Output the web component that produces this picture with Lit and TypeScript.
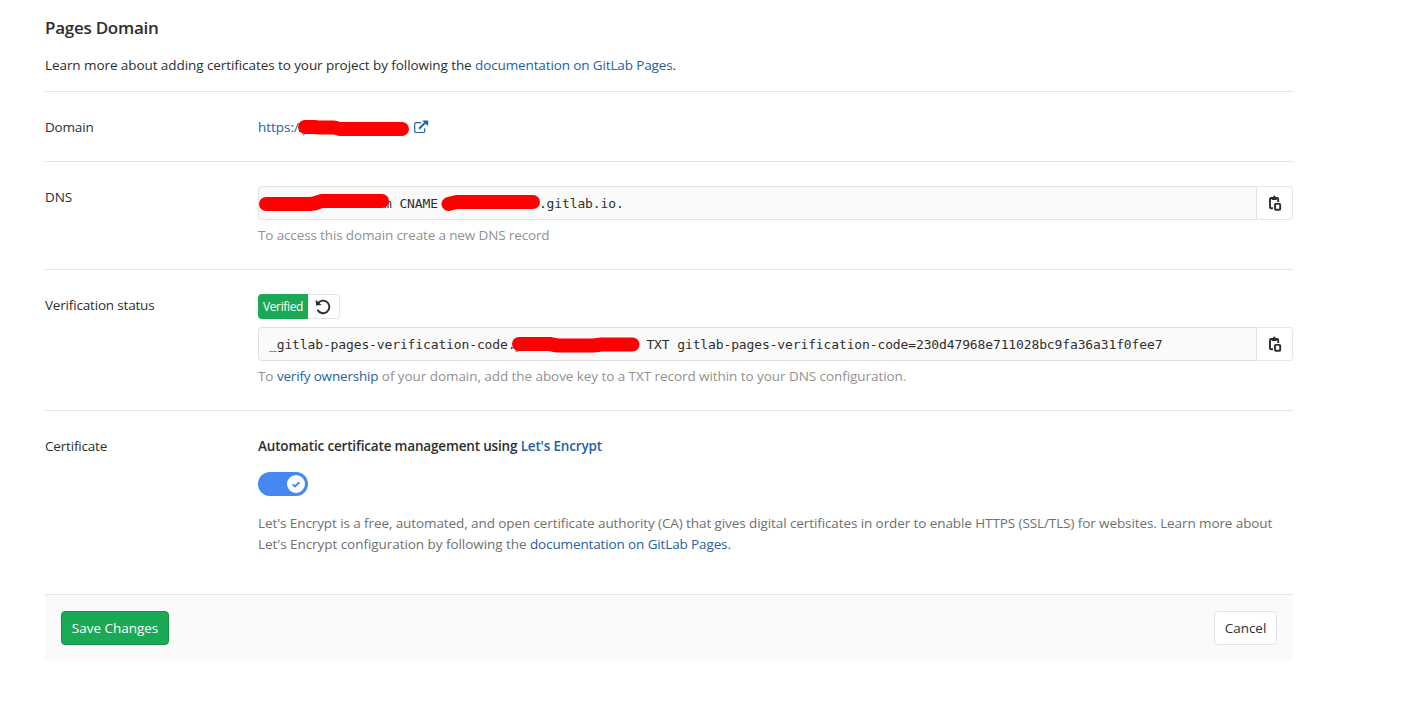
import { LitElement, html, svg, css } from "lit";
import { customElement } from "lit/decorators.js";

const copyIcon = html`<svg class="copy-icon" width="16" height="16" viewBox="0 0 16 16" fill="none" stroke="#2e2e2e">
  <path d="M6 13.200H4A1 1 0 0 1 3 12.200V4A1 1 0 0 1 4 3h6.200a1 1 0 0 1 1 1v3" stroke-width="1.900" />
  <path d="M4.700 5V2.700L6 2A1.300 1.300 0 0 1 7.200 .6A1.300 1.300 0 0 1 8.400 2l1.300 .7V5z" fill="#2e2e2e" stroke="none" />
  <rect x="8" y="8.900" width="5.200" height="5.900" rx="0.800" stroke-width="1.900" />
</svg>`;

const stroke = (d: string, width = 14) =>
  svg`<path d=${d} fill="none" stroke="#ff0000" stroke-width=${width} stroke-linecap="round" stroke-linejoin="round" />`;

@customElement("app-root")
export class AppRoot extends LitElement {
  static styles = css`
    :host {
      display: block;
      box-sizing: border-box;
      width: 1413px;
      height: 713px;
      padding: 0 120px 0 45px;
      background: #fff;
      color: #2e2e2e;
      font: 13.5px/21px "Open Sans", "Noto Sans", sans-serif;
      letter-spacing: -0.093px;
    }
    * { box-sizing: border-box; }
    svg { display: block; flex: none; overflow: visible; }
    a { color: #2560a4; text-decoration: none; }
    .doc { letter-spacing: -0.126px; }
    header { height: 92px; padding-top: 16px; border-bottom: 1px solid #e5e5e5; }
    h4 { margin: 0; font-size: 17px; line-height: 24px; font-weight: 600; letter-spacing: -0.265px; }
    .intro { margin: 15px 0 0; letter-spacing: -0.075px; }
    .row { display: grid; grid-template-columns: 213px 1fr; padding-top: 25px; border-bottom: 1px solid #e5e5e5; }
    .domain { height: 70px; }
    .dns { height: 108px; }
    .verification { height: 141px; }
    .certificate { height: 184px; border-bottom: none; }
    .label { letter-spacing: -0.18px; }
    .url { display: flex; height: 21px; align-items: center; letter-spacing: -0.013px; }
    .url-mask { width: 114px; }
    .external { margin-bottom: 2px; }
    .group { display: flex; height: 34px; margin-top: -1px; }
    .field {
      display: flex; flex: 1; align-items: center; padding: 2px 0 0 10px;
      background: #fafafa; border: 1px solid #e0e0e0; border-radius: 4px 0 0 4px;
      font: 13px/20px "DejaVu Sans Mono", "Liberation Mono", monospace;
      letter-spacing: -0.126px; white-space: pre;
    }
    .cname-field { padding-left: 0; }
    .copy {
      display: flex; align-items: center; justify-content: center; width: 36px; padding: 0;
      background: #fff; border: 1px solid #e5e5e5; border-left: 0; border-radius: 0 4px 4px 0;
    }
    .help { margin: 5px 0 0; color: #919191; letter-spacing: -0.136px; }
    .verify-help { letter-spacing: -0.063px; }
    .verify-help a { letter-spacing: -0.181px; }
    .status { display: flex; height: 25px; margin: -1px 0 9px; }
    .badge {
      width: 50px; background: #1aaa55; color: #fff; border-radius: 4px 0 0 4px;
      font-size: 12px; line-height: 25px; text-align: center; letter-spacing: -0.35px;
    }
    .retry {
      display: flex; align-items: center; width: 32px; padding: 0 0 0 7px;
      border: 1px solid #e5e5e5; border-left: 0; border-radius: 0 4px 4px 0; background: #fff;
    }
    .cert-title { font-weight: 600; letter-spacing: -0.17px; }
    .toggle {
      display: flex; align-items: center; justify-content: flex-end; width: 50px; height: 24px;
      margin: 15px 0 17px; padding: 0 3px; border: 0; border-radius: 12px; background: #4688f1;
    }
    .about { margin: 0; color: #707070; line-height: 21px; }
    .about-more { letter-spacing: -0.053px; }
    footer {
      display: flex; justify-content: space-between; align-items: flex-start; height: 67px;
      margin-top: -1px; padding: 16px; background: #fafafa; border-top: 1px solid #e5e5e5;
    }
    .btn {
      height: 34px; padding: 0; border-radius: 4px; font: inherit; letter-spacing: -0.02px;
      color: #2e2e2e; background: #fff; border: 1px solid #e3e3e3;
    }
    .save { width: 108px; color: #fff; background: #1aaa55; border-color: #168f48; }
    .cancel { width: 63px; }
  `;

  render() {
    return html`
      <header>
        <h4>Pages Domain</h4>
        <p class="intro">Learn more about adding certificates to your project by following the <a class="doc" href="#">documentation on GitLab Pages</a>.</p>
      </header>

      <section class="row domain">
        <div class="label">Domain</div>
        <div class="url">
          <a href="#">https:/</a>
          <svg class="url-mask" width="114" height="21" viewBox="299 117 114 21">
            <path d="M299.500 132l3-8" stroke="#2560a4" fill="none" />
            <path d="M303 135q1.500 0 2-2" stroke="#2560a4" fill="none" />
            ${stroke("M305 127H314l5 .5H334l6 1.500H402")}
          </svg>
          <svg class="external" width="16" height="16" viewBox="0 0 16 16" fill="none" stroke="#2560a4">
            <path d="M8 3.700H3.300A1.600 1.600 0 0 0 1.700 5.300v6.600a1.600 1.600 0 0 0 1.600 1.600h6.800a1.600 1.600 0 0 0 1.600-1.600V9.200" stroke-width="1.200" />
            <path d="M6 9.700L13 2.900" stroke-width="2" />
            <path d="M9.300 1.500h5.900v5.800z" fill="#2560a4" stroke="none" />
          </svg>
        </div>
      </section>

      <section class="row dns">
        <div>DNS</div>
        <div>
          <div class="group">
            <div class="field cname-field"><svg width="125" height="20" viewBox="259 194 125 20"></svg>m CNAME<svg width="101" height="20" viewBox="438 194 101 20">
                ${stroke("M266 204H310l4-.5l8-2.500H382")}
                ${stroke("M448.500 204l8-2H533")}
              </svg>.gitlab.io.</div>
            <button class="copy" aria-label="Copy">${copyIcon}</button>
          </div>
          <p class="help">To access this domain create a new DNS record</p>
        </div>
      </section>

      <section class="row verification">
        <div class="label">Verification status</div>
        <div>
          <div class="status">
            <span class="badge">Verified</span>
            <button class="retry" aria-label="Retry">
              <svg width="16" height="16" viewBox="0 0 16 16" fill="none" stroke="#2e2e2e">
                <path d="M2.900 4.300A6.300 6.300 0 1 1 2.500 10.800" stroke-width="1.900" />
                <path d="M.7 .8L1 6.400l5.600-.5z" fill="#2e2e2e" stroke="none" />
              </svg>
            </button>
          </div>
          <div class="group">
            <div class="field">_gitlab-pages-verification-code.<svg width="131" height="20" viewBox="515.500 335 131 20">
                <path d="M516 351h3" stroke="#2e2e2e" />
                ${stroke("M519.500 344H550l8 1.500H594l8-1H633")}
              </svg>TXT gitlab-pages-verification-code=230d47968e711028bc9fa36a31f0fee7</div>
            <button class="copy" aria-label="Copy">${copyIcon}</button>
          </div>
          <p class="help verify-help">To <a href="#">verify ownership</a> of your domain, add the above key to a TXT record within to your DNS configuration.</p>
        </div>
      </section>

      <section class="row certificate">
        <div class="label">Certificate</div>
        <div>
          <div class="cert-title">Automatic certificate management using <a href="#">Let's Encrypt</a></div>
          <button class="toggle" aria-label="Automatic certificate management">
            <svg width="18" height="18" viewBox="0 0 18 18">
              <circle cx="9" cy="9" r="9" fill="#fff" />
              <path d="M5.700 9.300L8 11.400L12.400 7.200" fill="none" stroke="#4688f1" stroke-width="1.900" />
            </svg>
          </button>
          <p class="about">Let's Encrypt is a free, automated, and open certificate authority (CA) that gives digital certificates in order to enable HTTPS (SSL/TLS) for websites. Learn more about<br /><span class="about-more">Let's Encrypt configuration by following the <a class="doc" href="#">documentation on GitLab Pages</a>.</span></p>
        </div>
      </section>

      <footer>
        <button class="btn save">Save Changes</button>
        <button class="btn cancel">Cancel</button>
      </footer>
    `;
  }
}
